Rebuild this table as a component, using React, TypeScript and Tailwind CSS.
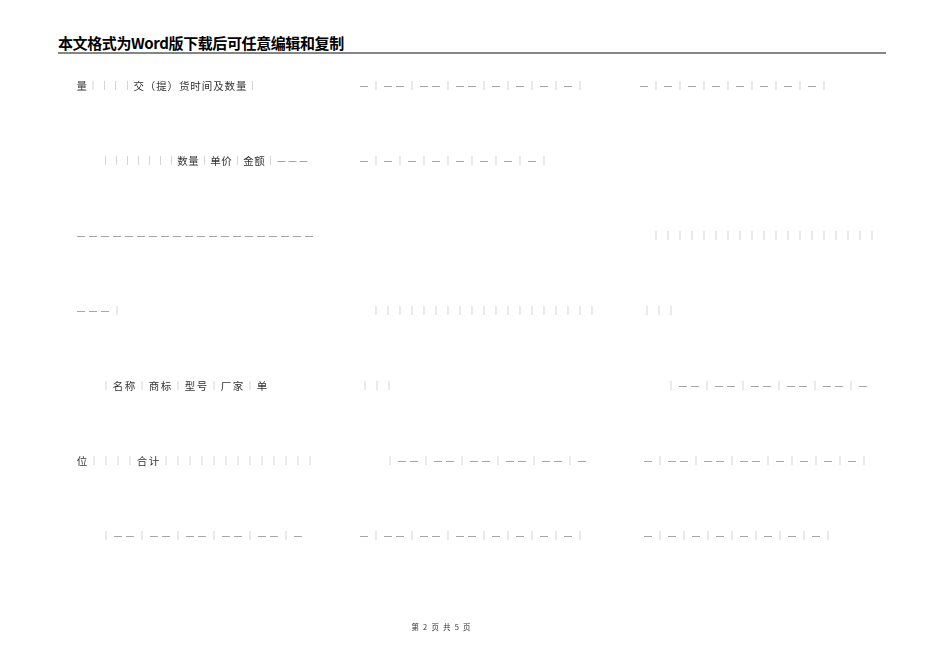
import * as React from 'react';

interface SegData {
  text: string;
  cell: string; // width of one character cell
  col?: string; // width of the column the segment sits in
}

interface RowData {
  pad: string;
  segs: SegData[];
}

const rows: RowData[] = [
  {
    pad: 'pl-[76px]',
    segs: [
      { text: '量｜｜｜｜交（提）货时间及数量｜', cell: 'w-[11.4px]', col: 'w-[282px]' },
      { text: '－｜－－｜－－｜－－｜－｜－｜－｜－｜', cell: 'w-[12px]', col: 'w-[280px]' },
      { text: '－｜－｜－｜－｜－｜－｜－｜－｜', cell: 'w-[12px]' },
    ],
  },
  {
    pad: 'pl-[100px]',
    segs: [
      { text: '｜｜｜｜｜｜｜数量｜单价｜金额｜－－－', cell: 'w-[11px]', col: 'w-[258px]' },
      { text: '－｜－｜－｜－｜－｜－｜－｜－｜', cell: 'w-[12px]' },
    ],
  },
  {
    pad: 'pl-[75px]',
    segs: [
      { text: '－－－－－－－－－－－－－－－－－－－－', cell: 'w-[12px]', col: 'w-[575px]' },
      { text: '｜｜｜｜｜｜｜｜｜｜｜｜｜｜｜｜｜｜｜', cell: 'w-[12px]' },
    ],
  },
  {
    pad: 'pl-[75px]',
    segs: [
      { text: '－－－｜', cell: 'w-[12px]', col: 'w-[295px]' },
      { text: '｜｜｜｜｜｜｜｜｜｜｜｜｜｜｜｜｜｜｜', cell: 'w-[12px]', col: 'w-[271px]' },
      { text: '｜｜｜', cell: 'w-[12px]' },
    ],
  },
  {
    pad: 'pl-[100px]',
    segs: [
      { text: '｜名称｜商标｜型号｜厂家｜单', cell: 'w-[12px]', col: 'w-[259px]' },
      { text: '｜｜｜', cell: 'w-[12px]', col: 'w-[306px]' },
      { text: '｜－－｜－－｜－－｜－－｜－－｜－', cell: 'w-[12px]' },
    ],
  },
  {
    pad: 'pl-[76px]',
    segs: [
      { text: '位｜｜｜｜合计｜｜｜｜｜｜｜｜｜｜｜｜｜', cell: 'w-[12px]', col: 'w-[308px]' },
      { text: '｜－－｜－－｜－－｜－－｜－－｜－', cell: 'w-[12px]', col: 'w-[258px]' },
      { text: '－｜－－｜－－｜－－｜－｜－｜－｜－｜', cell: 'w-[12px]' },
    ],
  },
  {
    pad: 'pl-[100px]',
    segs: [
      { text: '｜－－｜－－｜－－｜－－｜－－｜－', cell: 'w-[12px]', col: 'w-[258px]' },
      { text: '－｜－－｜－－｜－－｜－｜－｜－｜－｜', cell: 'w-[12px]', col: 'w-[284px]' },
      { text: '－｜－｜－｜－｜－｜－｜－｜－｜', cell: 'w-[12px]' },
    ],
  },
];

const Seg = ({ text, cell, col }: SegData) => (
  <div className={`flex shrink-0 ${col ?? ''}`}>
    {Array.from(text).map((ch, i) => (
      <span
        key={i}
        className={`${cell} inline-block shrink-0 text-center ${
          ch === '｜'
            ? 'text-[9px] text-[#9a9a9a]'
            : ch === '－'
            ? 'text-[11px] text-[#8c8c8c]'
            : 'text-[10.5px] text-[#333333]'
        }`}
      >
        {ch}
      </span>
    ))}
  </div>
);

export default function App() {
  return (
    <div className="w-[950px] h-[672px] bg-white overflow-hidden font-['Noto_Sans_CJK_SC',sans-serif]">
      <div className="pl-[58px] pr-[64px] pt-[35px]">
        <div className="text-[15px] font-bold leading-[16px] tracking-[-0.4px] text-black">
          本文格式为Word版下载后可任意编辑和复制
        </div>
        <div className="mt-[1px] h-[2px] bg-[#858585]" />
      </div>

      <div className="mt-[26px] antialiased [will-change:transform]">
        {rows.map((row, r) => (
          <div key={r} className={`flex h-[75px] items-start leading-[12px] ${row.pad}`}>
            {row.segs.map((s, i) => (
              <Seg key={i} {...s} />
            ))}
          </div>
        ))}

        <div className="mt-[17px] flex justify-center pr-[68px] text-[7.5px] leading-[10px] text-[#333333] [word-spacing:2.5px]">
          第 2 页 共 5 页
        </div>
      </div>
    </div>
  );
}
